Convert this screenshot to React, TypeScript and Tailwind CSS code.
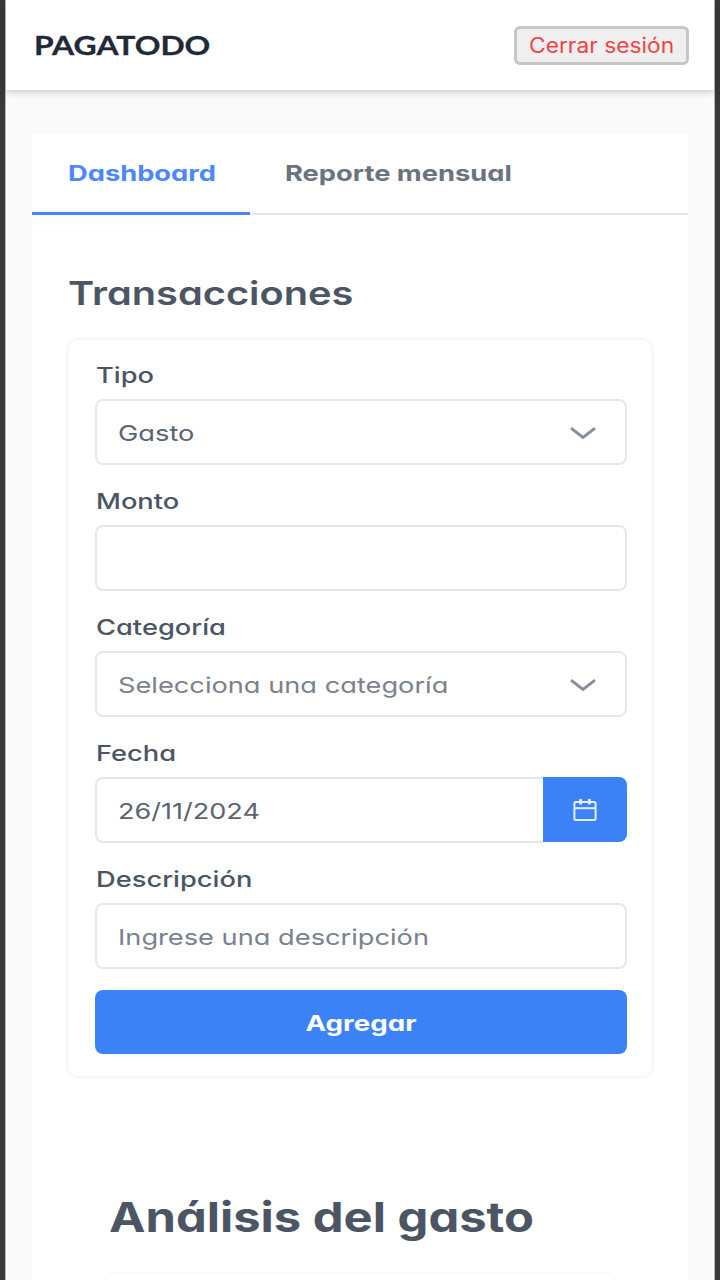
import type { ReactNode } from 'react';

function Stretch({ scale = 'origin-left scale-x-[1.25]', children }: { scale?: string; children: ReactNode }) {
  return <span className={`inline-block whitespace-nowrap ${scale}`}>{children}</span>;
}

function Chevron() {
  return (
    <svg className="mr-[28px] h-4 w-[28px]" viewBox="0 0 28 16" fill="none" stroke="#858d99" strokeWidth="2.9">
      <path d="M2 3.2 14 12.4 26 3.2" />
    </svg>
  );
}

function CalendarIcon() {
  return (
    <svg className="h-6 w-6" viewBox="0 0 24 24" fill="none" stroke="#e3edff" strokeWidth="2">
      <rect x="1.4" y="4" width="21.2" height="18" rx="1.5" />
      <path d="M1.4 10.2h21.2" />
      <path d="M7.6 1v5.4M16.4 1v5.4" strokeWidth="2.8" />
    </svg>
  );
}

function Field({ label, children }: { label: string; children: ReactNode }) {
  return (
    <div className="mb-[21px]">
      <div className="mb-[9px] h-[30px] pl-px text-[22px] leading-[30px] font-medium text-[#4b5563]">
        <Stretch scale="origin-left scale-x-[1.24]">{label}</Stretch>
      </div>
      {children}
    </div>
  );
}

const box =
  'flex h-[66px] items-center justify-between rounded-lg border-2 border-[#e5e7eb] bg-white pt-px pl-[21px] text-[22px] leading-[30px]';

export default function App() {
  return (
    <div className="flex h-[1280px] w-[720px] overflow-hidden bg-[#383838] pr-[5px] pl-[5px] font-['Inter',sans-serif] [font-feature-settings:'cv11']">
      <div className="flex w-full flex-col border-x border-[#b9bbbd] bg-[#f8fafc]">
        <header className="relative flex h-[90px] shrink-0 items-center justify-between bg-white pr-[25px] pl-[28px] shadow-[0_2px_7px_rgba(0,0,0,0.2)]">
          <span className="inline-block origin-left scale-x-[1.18] font-['Lato',sans-serif] text-[27px] leading-9 font-bold text-[#1f2937] [-webkit-text-stroke:0.3px_#1f2937]">
            PAGATODO
          </span>
          <button className="h-[39px] w-[175px] rounded-md border-[3px] border-[#c6c6c6] bg-[#efefef] pl-[12px] text-left text-[21px] leading-[34px] text-[#f04444] [font-feature-settings:normal]">
            <span className="inline-block origin-left scale-x-[1.085] whitespace-nowrap">Cerrar sesión</span>
          </button>
        </header>

        <main className="mx-[26px] mt-[44px] flex grow flex-col bg-white">
          <nav className="flex h-[81px] shrink-0 border-b-2 border-[#e5e7eb] text-[22px] leading-[30px] font-bold">
            <div className="-mb-0.5 w-[218px] border-b-[3px] border-[#4387f7] pt-[24px] pl-[36px] text-[#4d88fb]">
              <Stretch scale="origin-left scale-x-[1.24]">Dashboard</Stretch>
            </div>
            <div className="pt-[24px] pl-[35px] text-[#6b7280]">
              <Stretch scale="origin-left scale-x-[1.24]">Reporte mensual</Stretch>
            </div>
          </nav>

          <h2 className="mt-[54px] h-[48px] pl-[36px] text-[33px] leading-[48px] font-semibold text-[#4b5563]">
            <Stretch scale="origin-left scale-x-[1.205]">Transacciones</Stretch>
          </h2>

          <section className="mt-[21px] mr-[34px] ml-[34px] h-[740px] shrink-0 rounded-xl border-2 border-[#f6f7f8] pt-[20px] pr-[25px] pl-[27px]">
            <Field label="Tipo">
              <div className={`${box} text-[#5b6472]`}>
                <Stretch scale="origin-left scale-x-[1.24]">Gasto</Stretch>
                <Chevron />
              </div>
            </Field>
            <Field label="Monto">
              <div className={box} />
            </Field>
            <Field label="Categoría">
              <div className={`${box} text-[#7a828e]`}>
                <Stretch scale="origin-left scale-x-[1.237]">Selecciona una categoría</Stretch>
                <Chevron />
              </div>
            </Field>
            <Field label="Fecha">
              <div className="flex">
                <div className={`${box} grow rounded-r-none border-r-0 text-[#5b6472]`}>
                  <Stretch scale="origin-left scale-x-[1.23]">26/11/2024</Stretch>
                </div>
                <div className="flex h-[65px] w-[84px] items-center justify-center rounded-r-lg bg-[#3b82f6]">
                  <CalendarIcon />
                </div>
              </div>
            </Field>
            <Field label="Descripción">
              <div className={`${box} h-[65px] text-[#7a828e]`}>
                <Stretch scale="origin-left scale-x-[1.237]">Ingrese una descripción</Stretch>
              </div>
            </Field>
            <button className="mt-px block h-[64px] w-full rounded-lg bg-[#3b82f6] pt-px text-[22px] leading-[30px] font-bold text-white">
              <Stretch scale="origin-center scale-x-[1.26]">Agregar</Stretch>
            </button>
          </section>

          <h1 className="mt-[109px] h-[60px] pl-[77px] text-[41px] leading-[60px] font-bold text-[#4b5563]">
            <Stretch scale="origin-left scale-x-[1.192]">Análisis del gasto</Stretch>
          </h1>
          <div className="mt-[25px] mr-[72px] ml-[72px] h-2 shrink-0 rounded-t-xl border-2 border-b-0 border-[#fbfbfc]" />
        </main>
      </div>
    </div>
  );
}
